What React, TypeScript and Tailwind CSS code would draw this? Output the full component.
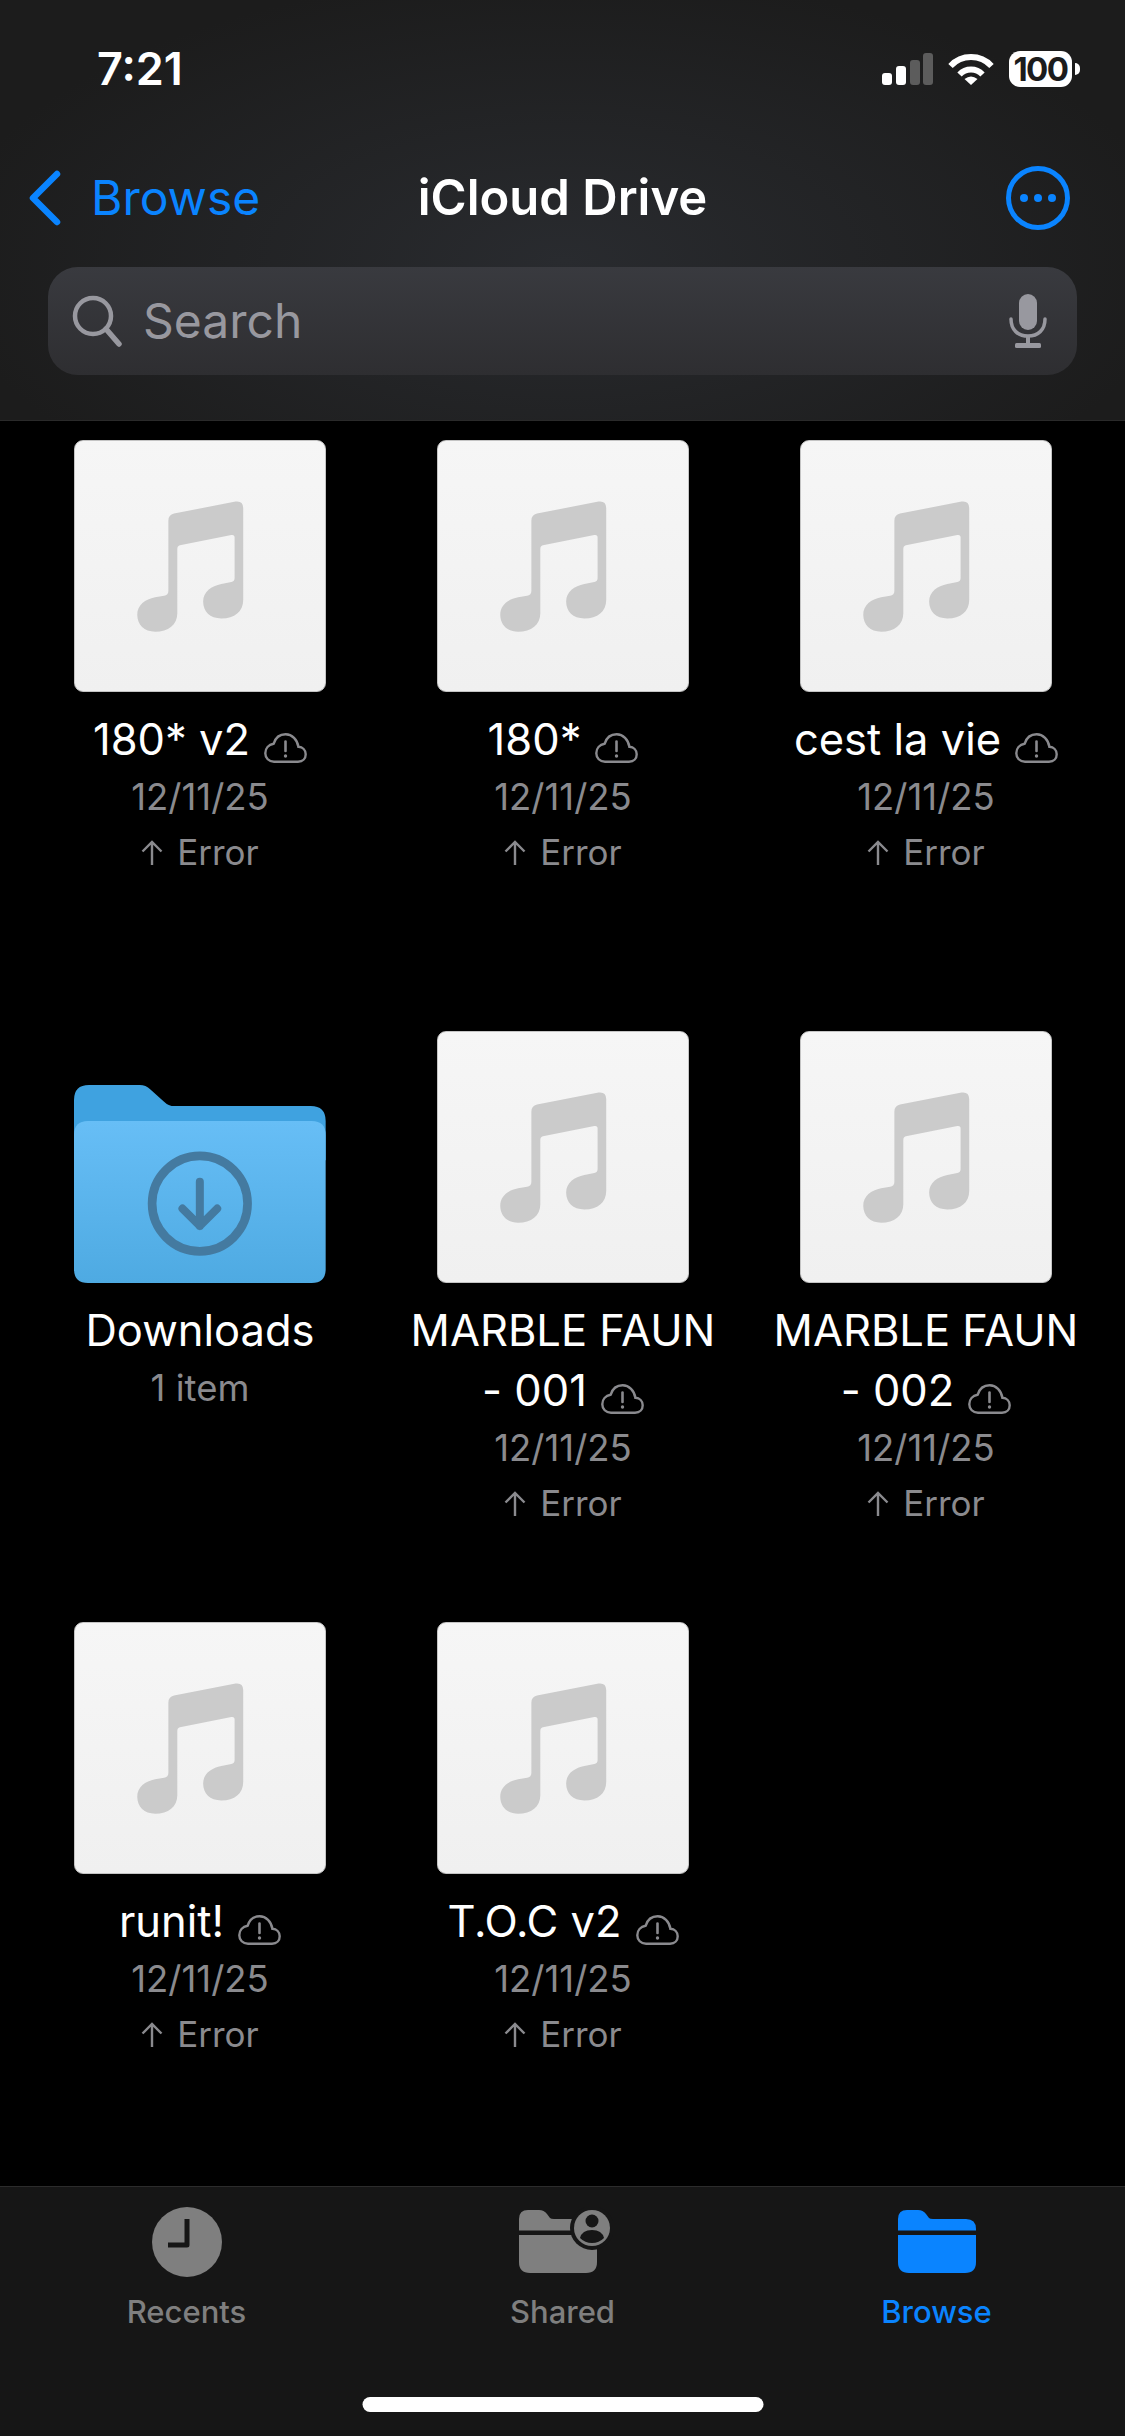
const FILES = [
  { kind: "music", name: "180* v2", sub: "12/11/25" },
  { kind: "music", name: "180*", sub: "12/11/25" },
  { kind: "music", name: "cest la vie", sub: "12/11/25" },
  { kind: "folder", name: "Downloads", sub: "1 item" },
  { kind: "music", name: "MARBLE FAUN - 001", sub: "12/11/25" },
  { kind: "music", name: "MARBLE FAUN - 002", sub: "12/11/25" },
  { kind: "music", name: "runit!", sub: "12/11/25" },
  { kind: "music", name: "T.O.C v2", sub: "12/11/25" },
];

function MusicThumb() {
  return (
    <div className="h-[252px] w-[252px] shrink-0 overflow-hidden rounded-[9px] border border-[#c4c4c4] bg-gradient-to-b from-[#f6f6f6] to-[#f0f0f0]">
      <svg viewBox="103 60 755 755" className="h-full w-full">
        <path
          fill="#cbcbcb"
          d="M385 300 Q385 283 402 279 L588 243 Q610 240 611 262 L611 540 C611 575 585 596 545 596 C510 596 490 575 490 545 C490 515 515 498 545 492 L575 486 Q585 484 585 474 L585 352 Q585 342 575 344 L420 375 Q412 377 412 386 L412 580 C412 615 385 636 345 636 C312 636 291 615 291 585 C291 555 315 538 345 532 L372 527 Q385 525 385 512 Z"
        />
      </svg>
    </div>
  );
}

function FolderThumb() {
  return (
    <svg viewBox="103 -87 755 755" className="h-[252px] w-[252px] shrink-0">
      <defs>
        <linearGradient id="folderFront" x1="0" y1="0" x2="0" y2="1">
          <stop offset="0" stopColor="#67bef6" />
          <stop offset="1" stopColor="#4eaae2" />
        </linearGradient>
      </defs>
      <path
        fill="#3fa2e0"
        d="M103 120 Q103 75 148 75 L300 75 Q318 75 332 88 L372 124 Q386 138 404 138 L812 138 Q857 138 857 183 L857 300 L103 300 Z"
      />
      <path
        fill="url(#folderFront)"
        d="M103 225 Q103 183 145 183 L815 183 Q857 183 857 225 L857 626 Q857 668 815 668 L145 668 Q103 668 103 626 Z"
      />
      <circle cx="480" cy="430" r="143" fill="none" stroke="#447aa0" strokeWidth="26" />
      <path d="M480 365 L480 497 M428 445 L480 497 L532 445" fill="none" stroke="#447aa0" strokeWidth="24" strokeLinecap="round" strokeLinejoin="round" />
    </svg>
  );
}

function CloudAlert() {
  return (
    <svg viewBox="0 0 43 30" className="ml-[14px] inline-block h-[30px] w-[43px] align-[-8px]">
      <path
        d="M10 28.7 H34 C39 28.7 41.7 25.3 41.7 21.3 C41.7 17 38.6 14 34.4 13.8 C33.4 6.4 28 1.3 21.6 1.3 C15.6 1.3 11.4 5 9.6 10.8 C4.6 11.6 1.3 15.4 1.3 20.2 C1.3 25 4.8 28.7 10 28.7 Z"
        fill="none"
        stroke="#8a8a8e"
        strokeWidth="2.4"
      />
      <path d="M21.5 8.5 V18" stroke="#8a8a8e" strokeWidth="2.6" strokeLinecap="round" />
      <circle cx="21.5" cy="23" r="1.7" fill="#8a8a8e" />
    </svg>
  );
}

function FileCell({ kind, name, sub }: { kind: string; name: string; sub: string }) {
  return (
    <div className="flex flex-col items-center">
      {kind === "music" ? <MusicThumb /> : <FolderThumb />}
      <div className="mt-[17px] w-[320px] shrink-0 text-center">
        <p className="text-[43.5px] leading-[60px] text-white">
          {name}
          {kind === "music" && <CloudAlert />}
        </p>
        <p className="text-[36.5px] leading-[56px] text-[#8a8a8e]">{sub}</p>
        {kind === "music" && (
          <p className="flex items-center justify-center gap-[14px] text-[35px] leading-[55px] text-[#8a8a8e]">
            <svg viewBox="0 0 22 26" className="h-[26px] w-[22px]">
              <path d="M11 25 V2 M1.5 11.5 L11 2 L20.5 11.5" fill="none" stroke="#8a8a8e" strokeWidth="2.4" />
            </svg>
            Error
          </p>
        )}
      </div>
    </div>
  );
}

function StatusIcons() {
  return (
    <div className="flex items-center">
      <svg viewBox="0 0 51 32" className="h-[32px] w-[51px]">
        <rect x="0" y="20" width="10" height="12" rx="3" fill="#fff" />
        <rect x="14" y="13" width="10" height="19" rx="3" fill="#fff" />
        <rect x="28" y="7" width="10" height="25" rx="3" fill="#5c5c5c" />
        <rect x="41" y="0" width="10" height="32" rx="3" fill="#5c5c5c" />
      </svg>
      <svg viewBox="0 0 46 32" className="ml-[15px] h-[32px] w-[46px]">
        <path d="M2.5 13 A28 28 0 0 1 43.5 13" fill="none" stroke="#fff" strokeWidth="6" />
        <path d="M11.5 21.5 A16 16 0 0 1 34.5 21.5" fill="none" stroke="#fff" strokeWidth="6" />
        <path d="M16.5 26 Q23 21 29.5 26 L23 32 Z" fill="#fff" />
      </svg>
      <div className="ml-[15px] flex h-[36px] w-[63px] items-center justify-center rounded-[11px] bg-white text-[33px] font-bold leading-none tracking-[-1.5px] text-[#1c1c1c]">
        100
      </div>
      <div className="ml-[3px] h-[12px] w-[5px] rounded-r-full bg-white" />
    </div>
  );
}

function Header() {
  return (
    <header className="h-[421px] shrink-0 border-b border-[#2a2a2a] bg-[radial-gradient(ellipse_at_50%_62%,#292b2f_0%,#1c1c1c_78%)]">
      <div className="flex items-center justify-between pl-[97px] pr-[45px] pt-[41px]">
        <span className="text-[45px] font-semibold leading-[56px] text-white">7:21</span>
        <StatusIcons />
      </div>
      <div className="mt-[69px] grid grid-cols-[1fr_auto_1fr] items-center px-[28px]">
        <div className="flex items-center gap-[29px]">
          <svg viewBox="0 0 34 56" className="h-[56px] w-[34px]">
            <path d="M29 4 L5 28 L29 52" fill="none" stroke="#0a84ff" strokeWidth="6.5" strokeLinecap="round" strokeLinejoin="round" />
          </svg>
          <span className="text-[48px] leading-[64px] text-[#0a84ff]">Browse</span>
        </div>
        <span className="text-[49px] font-semibold leading-[64px] text-white">iCloud Drive</span>
        <div className="flex justify-end pr-[27px]">
          <svg viewBox="0 0 64 64" className="h-[64px] w-[64px]">
            <circle cx="32" cy="32" r="29.5" fill="none" stroke="#0a84ff" strokeWidth="5" />
            <circle cx="18" cy="32" r="4" fill="#0a84ff" />
            <circle cx="32" cy="32" r="4" fill="#0a84ff" />
            <circle cx="46" cy="32" r="4" fill="#0a84ff" />
          </svg>
        </div>
      </div>
      <div className="mx-[48px] mt-[37px] flex h-[108px] items-center rounded-[30px] bg-gradient-to-b from-[#393a3f] to-[#2e2e31] pl-[24px] pr-[30px]">
        <svg viewBox="0 0 50 52" className="h-[52px] w-[50px] shrink-0">
          <circle cx="21" cy="21" r="18" fill="none" stroke="#98989f" strokeWidth="4.5" />
          <path d="M34 34 L47 49" stroke="#98989f" strokeWidth="5.5" strokeLinecap="round" />
        </svg>
        <span className="ml-[21px] text-[48px] leading-none text-[#98989f]">Search</span>
        <svg viewBox="0 0 38 54" className="ml-auto h-[54px] w-[38px] shrink-0">
          <rect x="10" y="0" width="18" height="36" rx="9" fill="#98989f" />
          <path d="M2 25 C2 36 9 42 19 42 C29 42 36 36 36 25" fill="none" stroke="#98989f" strokeWidth="3.5" strokeLinecap="round" />
          <path d="M19 42 V50" stroke="#98989f" strokeWidth="4" />
          <rect x="6" y="49" width="26" height="5" rx="1.5" fill="#98989f" />
        </svg>
      </div>
    </header>
  );
}

function FolderTabIcon({ color }: { color: string }) {
  return (
    <>
      <path fill={color} d="M0 9 Q0 0 9 0 H20 Q25 0 28 4 L31 8 Q32 9 35 9 H68 Q78 9 78 19 V20.5 H0 Z" />
      <path fill={color} d="M0 25 H78 V52 Q78 63 67 63 H11 Q0 63 0 52 Z" />
    </>
  );
}

function TabBar() {
  return (
    <footer className="relative h-[250px] shrink-0 border-t border-[#2c2c2c] bg-[#161616]">
      <div className="grid grid-cols-3 pt-[20px]">
        <div className="flex -translate-x-[1px] flex-col items-center">
          <svg viewBox="0 0 70 70" className="h-[70px] w-[70px]">
            <circle cx="35" cy="35" r="35" fill="#7f7f7f" />
            <path d="M35 12 V38 H16" fill="none" stroke="#161616" strokeWidth="5" strokeLinejoin="round" />
          </svg>
          <span className="mt-[15px] text-[31px] font-medium leading-[40px] text-[#7f7f7f]">Recents</span>
        </div>
        <div className="flex flex-col items-center">
          <svg viewBox="0 0 94 70" className="h-[70px] w-[94px] translate-x-[3px]">
            <g transform="translate(0 3)">
              <FolderTabIcon color="#7f7f7f" />
            </g>
            <circle cx="73" cy="21" r="22" fill="#161616" />
            <circle cx="73" cy="21" r="18" fill="#7f7f7f" />
            <circle cx="73" cy="14" r="6.5" fill="#161616" />
            <path d="M61 31 Q63 23 73 23 Q83 23 85 31 Q80 36 73 36 Q66 36 61 31 Z" fill="#161616" />
          </svg>
          <span className="mt-[15px] text-[31px] font-medium leading-[40px] text-[#7f7f7f]">Shared</span>
        </div>
        <div className="flex -translate-x-[1px] flex-col items-center">
          <svg viewBox="0 0 78 70" className="h-[70px] w-[78px]">
            <g transform="translate(0 3)">
              <FolderTabIcon color="#0a84ff" />
            </g>
          </svg>
          <span className="mt-[15px] text-[31px] font-medium leading-[40px] text-[#0a84ff]">Browse</span>
        </div>
      </div>
      <div className="absolute bottom-[24px] left-1/2 h-[15px] w-[401px] -translate-x-1/2 rounded-full bg-white" />
    </footer>
  );
}

export default function App() {
  return (
    <div className="flex h-[2436px] w-[1125px] flex-col overflow-hidden bg-black [font-family:Inter,sans-serif]">
      <Header />
      <main className="min-h-0 flex-1 px-[74px] pt-[19px]">
        <div className="grid grid-cols-[repeat(3,252px)] gap-x-[111px] auto-rows-[591px]">
          {FILES.map((f) => (
            <FileCell key={f.name} kind={f.kind} name={f.name} sub={f.sub} />
          ))}
        </div>
      </main>
      <TabBar />
    </div>
  );
}
